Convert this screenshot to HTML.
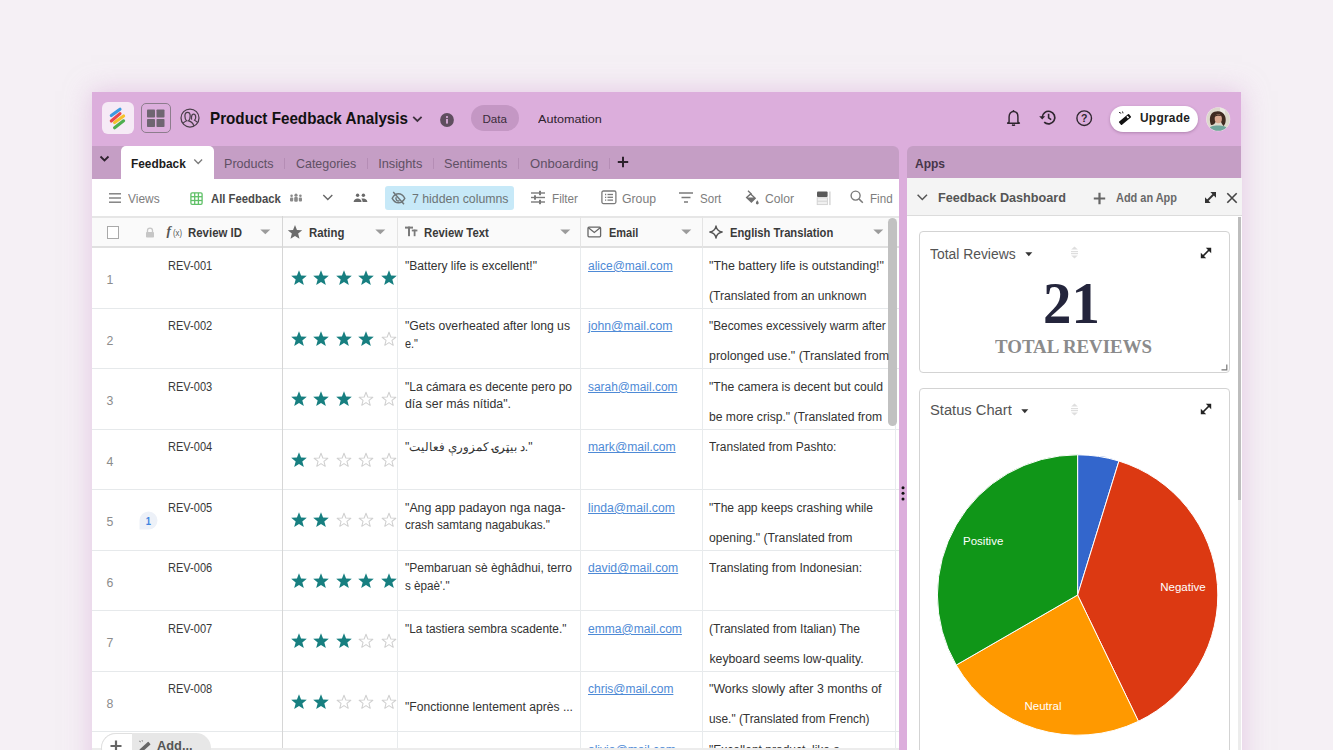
<!DOCTYPE html><html><head><meta charset="utf-8"><style>
html,body{margin:0;padding:0;}
body{width:1333px;height:750px;overflow:hidden;background:#f5f0f5;position:relative;font-family:"Liberation Sans",sans-serif;}
#win{position:absolute;left:92px;top:92px;width:1149px;height:700px;background:#dcaedc;box-shadow:0 0 24px 1px rgba(214,168,214,0.55);}
#root{position:absolute;left:0;top:0;width:1333px;height:750px;overflow:hidden;}
</style></head><body><div id="win"></div><div id="root">
<div style="position:absolute;left:102px;top:102px;width:32px;height:32px;background:#f6eaf6;border-radius:6px;"></div>
<svg style="position:absolute;left:102px;top:102px;overflow:visible;" width="32" height="32" viewBox="0 0 32 32"><g stroke-linecap="round" stroke-width="3.1"><line x1="9.3" y1="13.6" x2="18" y2="7.2" stroke="#3d9ae0"/><line x1="9.3" y1="19" x2="18" y2="11.6" stroke="#e9484e"/><line x1="12.6" y1="20.6" x2="21.6" y2="14" stroke="#f5c22c"/><line x1="12.6" y1="25.8" x2="21.6" y2="18.8" stroke="#4fae4f"/></g></svg>
<div style="position:absolute;left:141px;top:103px;width:27.5px;height:27.5px;border:1.4px solid #8d7d8d;border-radius:5px;"></div>
<svg style="position:absolute;left:141px;top:103px;overflow:visible;" width="30" height="30" viewBox="0 0 30 30"><g fill="#6f6571"><rect x="6" y="6.5" width="8" height="8" rx="0.8"/><rect x="15.5" y="6.5" width="8" height="8" rx="0.8"/><rect x="6" y="16" width="8" height="8" rx="0.8"/><rect x="15.5" y="16" width="8" height="8" rx="0.8"/></g></svg>
<svg style="position:absolute;left:178px;top:106px;overflow:visible;" width="24" height="24" viewBox="0 0 24 24"><g fill="none" stroke="#4b3f4b" stroke-width="1.25"><circle cx="12" cy="12" r="9"/><path d="M5 17.2 C6.3 15.9 7.7 15.2 8.6 14.8 C7.4 13.7 6.9 11.9 6.9 10 C6.9 7.6 8 6.3 9.6 6.3 C11.2 6.3 12.2 7.6 12.2 10 C12.2 11.9 11.8 13.7 10.6 14.8 C12.6 15.4 15 16.4 15.8 19.8"/><path d="M13.7 13.6 C13.4 12.8 13.4 11.9 13.5 11 C13.7 9.2 14.5 8.2 15.6 8.2 C16.8 8.2 17.7 9.4 17.7 11.2 C17.7 12.5 17.3 13.4 16.6 14.2 C17.6 14.7 18.4 15.3 19 16"/></g></svg>
<svg style="position:absolute;left:412px;top:115px;overflow:visible;" width="11" height="8" viewBox="0 0 11 8"><polyline points="1.2,1.8 5.4,6 9.6,1.8" fill="none" stroke="#3e313e" stroke-width="1.8"/></svg>
<svg style="position:absolute;left:440px;top:113px;overflow:visible;" width="14" height="14" viewBox="0 0 14 14"><circle cx="7" cy="7" r="6.9" fill="#5f4e5f"/><rect x="6.1" y="6" width="1.8" height="4.6" fill="#dcaedc"/><circle cx="7" cy="4.1" r="1.05" fill="#dcaedc"/></svg>
<div style="position:absolute;left:471px;top:105.3px;width:48px;height:26px;background:#c497c4;border-radius:13px;"></div>
<svg style="position:absolute;left:1005px;top:108px;overflow:visible;" width="17" height="20" viewBox="0 0 17 20"><g transform="translate(8.5 10) scale(0.9 0.92) translate(-8.5 -10)"><path d="M3.6 14.3 L3.6 8.8 C3.6 5.4 5.6 3 8.5 3 C11.4 3 13.4 5.4 13.4 8.8 L13.4 14.3 L15 15.6 L2 15.6 Z" fill="none" stroke="#2f262f" stroke-width="1.6" stroke-linejoin="round"/><path d="M7 17.2 Q8.5 18.8 10 17.2" stroke="#2f262f" stroke-width="1.6" fill="none"/><circle cx="8.5" cy="2.4" r="1" fill="#2f262f"/></g></svg>
<svg style="position:absolute;left:1038px;top:109px;overflow:visible;" width="20" height="17" viewBox="0 0 20 17"><path d="M4.2 8.5 A6.3 6.3 0 1 1 6.2 13.2" fill="none" stroke="#2f262f" stroke-width="1.7"/><path d="M1.2 7.2 L4.2 10.6 L7.2 7.2 Z" fill="#2f262f"/><path d="M10.6 4.8 L10.6 8.8 L13.2 10.6" fill="none" stroke="#2f262f" stroke-width="1.6"/></svg>
<svg style="position:absolute;left:1076px;top:110px;overflow:visible;" width="17" height="17" viewBox="0 0 17 17"><circle cx="8.2" cy="8.2" r="7.3" fill="none" stroke="#2f262f" stroke-width="1.4"/><text x="8.2" y="12.1" text-anchor="middle" font-family="Liberation Sans" font-weight="700" font-size="10.5" fill="#2f262f">?</text></svg>
<div style="position:absolute;left:1110.4px;top:105.5px;width:88px;height:26.3px;background:#fff;border-radius:13.5px;box-shadow:0 1px 3px rgba(90,50,90,0.35);"></div>
<svg style="position:absolute;left:1117px;top:111px;overflow:visible;" width="16" height="16" viewBox="0 0 16 16"><g transform="rotate(-40 8 8.5)"><rect x="1.5" y="6.3" width="13" height="4.4" rx="0.8" fill="#111"/><rect x="10.8" y="7.3" width="1.6" height="2.4" fill="#fff"/></g><g stroke="#111" stroke-width="0.9"><line x1="2" y1="1.3" x2="4.2" y2="2.3"/><line x1="5.5" y1="0.5" x2="6" y2="2.3"/></g></svg>
<svg style="position:absolute;left:1206px;top:107px;overflow:visible;" width="25" height="25" viewBox="0 0 25 25"><defs><clipPath id="av"><circle cx="12.2" cy="12.2" r="11.6"/></clipPath></defs><circle cx="12.2" cy="12.2" r="12" fill="#f2e6f0"/><g clip-path="url(#av)"><rect x="0" y="0" width="25" height="25" fill="#ddd8cc"/><rect x="14" y="0" width="5" height="12" fill="#ece9e2"/><path d="M1 26 C2 20 6 18.5 12 18.5 C18 18.5 22 20 24 26 Z" fill="#6fa59b"/><path d="M5 18 C3 13 3.5 6.5 8.5 4.8 C12.5 3.4 17.5 4.5 19 9 C20.5 13 19.5 17.5 17.5 19 C16 17 15.5 16 15 15 L9.5 15 C9 16.5 8 18 5 18 Z" fill="#3f2a20"/><ellipse cx="12.3" cy="11.8" rx="3.6" ry="4.5" fill="#d9a991"/><path d="M8.3 10 C8.8 7 13.5 6.3 16.3 9.5 C14.5 8.4 10.5 8.4 8.3 10 Z" fill="#3f2a20"/></g></svg>
<div style="position:absolute;left:92px;top:146px;width:807.3px;height:33px;background:#c59ec5;border-top-right-radius:6px;"></div>
<svg style="position:absolute;left:99px;top:154px;overflow:visible;" width="12" height="10" viewBox="0 0 12 10"><polyline points="1.5,2.5 5.5,6.5 9.5,2.5" fill="none" stroke="#2e222e" stroke-width="1.8"/></svg>
<div style="position:absolute;left:120.5px;top:146px;width:93px;height:33px;background:#fff;border-top-left-radius:5px;border-top-right-radius:5px;"></div>
<svg style="position:absolute;left:193px;top:157px;overflow:visible;" width="11" height="9" viewBox="0 0 11 9"><polyline points="1.3,2.5 5.2,6.5 9.1,2.5" fill="none" stroke="#7a7a7a" stroke-width="1.3"/></svg>
<div style="position:absolute;left:284.3px;top:157.6px;width:1px;height:11px;background:#b58db5;"></div>
<div style="position:absolute;left:366.5px;top:157.6px;width:1px;height:11px;background:#b58db5;"></div>
<div style="position:absolute;left:432.5px;top:157.6px;width:1px;height:11px;background:#b58db5;"></div>
<div style="position:absolute;left:518.3px;top:157.6px;width:1px;height:11px;background:#b58db5;"></div>
<div style="position:absolute;left:609.0px;top:157.6px;width:1px;height:11px;background:#b58db5;"></div>
<svg style="position:absolute;left:616px;top:155px;overflow:visible;" width="14" height="14" viewBox="0 0 14 14"><path d="M7 1.8 V12.2 M1.8 7 H12.2" stroke="#2c222c" stroke-width="2"/></svg>
<div style="position:absolute;left:92px;top:179px;width:807.3px;height:37px;background:#fff;"></div>
<svg style="position:absolute;left:108px;top:192px;overflow:visible;" width="14" height="12" viewBox="0 0 14 12"><g stroke="#7b7b7b" stroke-width="1.4"><line x1="1" y1="1.8" x2="13" y2="1.8"/><line x1="1" y1="6" x2="13" y2="6"/><line x1="1" y1="10.2" x2="13" y2="10.2"/></g></svg>
<svg style="position:absolute;left:190px;top:191.5px;overflow:visible;" width="13" height="13" viewBox="0 0 13 13"><g fill="none" stroke="#5fc067" stroke-width="1.3"><rect x="0.9" y="0.9" width="11.2" height="11.4" rx="1.2"/><line x1="4.7" y1="1" x2="4.7" y2="12.2"/><line x1="8.4" y1="1" x2="8.4" y2="12.2"/><line x1="1" y1="4.7" x2="12" y2="4.7"/><line x1="1" y1="8.5" x2="12" y2="8.5"/></g></svg>
<svg style="position:absolute;left:289px;top:192px;overflow:visible;" width="14" height="11" viewBox="0 0 14 11"><g fill="#8a8a8a"><circle cx="7" cy="3.2" r="1.6"/><rect x="5.2" y="5" width="3.6" height="4.8" rx="1"/><circle cx="2.6" cy="3.8" r="1.3"/><rect x="1" y="5.4" width="3.2" height="4.2" rx="1"/><circle cx="11.4" cy="3.8" r="1.3"/><rect x="9.8" y="5.4" width="3.2" height="4.2" rx="1"/></g></svg>
<svg style="position:absolute;left:322px;top:193px;overflow:visible;" width="12" height="9" viewBox="0 0 12 9"><polyline points="1.3,2 5.8,6.5 10.3,2" fill="none" stroke="#666" stroke-width="1.4"/></svg>
<svg style="position:absolute;left:353px;top:192px;overflow:visible;" width="15" height="11" viewBox="0 0 15 11"><g fill="#6a6a6a"><circle cx="4.6" cy="3.2" r="1.7"/><path d="M0.6 10 C0.8 7.6 2.4 6.4 4.6 6.4 C6.8 6.4 8.4 7.6 8.6 10 Z"/><circle cx="10.4" cy="3.2" r="1.7"/><path d="M8.2 6.8 C8.8 6.5 9.6 6.4 10.4 6.4 C12.6 6.4 14.2 7.6 14.4 10 H9.6 C9.5 8.6 9 7.5 8.2 6.8 Z"/></g></svg>
<div style="position:absolute;left:385px;top:186px;width:129px;height:23.5px;background:#c7e9f8;border-radius:3px;"></div>
<svg style="position:absolute;left:390.5px;top:191px;overflow:visible;" width="15" height="14" viewBox="0 0 15 14"><g fill="none" stroke="#6d7578" stroke-width="1.4"><path d="M1.2 7.3 C3 4 5.2 2.8 7.5 2.8 C9.8 2.8 12 4 13.8 7.3 C12 10.6 9.8 11.8 7.5 11.8 C5.2 11.8 3 10.6 1.2 7.3 Z"/><path d="M5.3 6.2 A2.4 2.4 0 0 0 8.6 9.5"/><line x1="2.2" y1="1" x2="13" y2="13.2"/></g></svg>
<svg style="position:absolute;left:530px;top:190px;overflow:visible;" width="16" height="15" viewBox="0 0 16 15"><g stroke="#7a7a7a" stroke-width="1.4"><line x1="1" y1="3" x2="15" y2="3"/><line x1="1" y1="7.5" x2="15" y2="7.5"/><line x1="1" y1="12" x2="15" y2="12"/></g><g fill="#7a7a7a"><rect x="9" y="0.8" width="2" height="4.4"/><rect x="4" y="5.3" width="2" height="4.4"/><rect x="9" y="9.8" width="2" height="4.4"/></g></svg>
<svg style="position:absolute;left:601px;top:190px;overflow:visible;" width="16" height="15" viewBox="0 0 16 15"><g fill="none" stroke="#7a7a7a" stroke-width="1.3"><rect x="0.9" y="1" width="14" height="12.6" rx="1.5"/></g><g stroke="#7a7a7a" stroke-width="1.3"><line x1="4" y1="4.5" x2="5.2" y2="4.5"/><line x1="6.5" y1="4.5" x2="12" y2="4.5"/><line x1="4" y1="7.3" x2="5.2" y2="7.3"/><line x1="6.5" y1="7.3" x2="12" y2="7.3"/><line x1="4" y1="10.1" x2="5.2" y2="10.1"/><line x1="6.5" y1="10.1" x2="12" y2="10.1"/></g></svg>
<svg style="position:absolute;left:678px;top:191px;overflow:visible;" width="16" height="13" viewBox="0 0 16 13"><g stroke="#7a7a7a" stroke-width="1.5"><line x1="1" y1="2" x2="15" y2="2"/><line x1="3.5" y1="6.5" x2="12.5" y2="6.5"/><line x1="6" y1="11" x2="10" y2="11"/></g></svg>
<svg style="position:absolute;left:744px;top:190px;overflow:visible;" width="16" height="15" viewBox="0 0 16 15"><g fill="#707070"><path d="M6.6 3 L12.2 8.2 L7.4 13 L1.6 7.6 Z M6.6 4.9 L3.6 7.6 L9.6 7.6 Z" fill-rule="evenodd"/><path d="M13.3 10.2 C14.1 11.4 14.7 12.2 14.7 13 C14.7 13.8 14.1 14.4 13.3 14.4 C12.5 14.4 11.9 13.8 11.9 13 C11.9 12.2 12.5 11.4 13.3 10.2 Z"/></g><line x1="4" y1="0.8" x2="7.6" y2="4.2" stroke="#707070" stroke-width="1.3"/></svg>
<svg style="position:absolute;left:816px;top:190.5px;overflow:visible;" width="16" height="15" viewBox="0 0 16 15"><rect x="1" y="0.5" width="10.6" height="5.6" rx="1" fill="#5a5a5a"/><rect x="1.2" y="6.8" width="10.2" height="6.8" fill="#f0f0f0" stroke="#d0d0d0" stroke-width="0.9"/><line x1="1.2" y1="10.2" x2="11.4" y2="10.2" stroke="#d0d0d0" stroke-width="0.9"/><rect x="13.2" y="0.5" width="1.4" height="13.6" fill="#d4d4d4"/></svg>
<svg style="position:absolute;left:850px;top:190px;overflow:visible;" width="14" height="14" viewBox="0 0 14 14"><circle cx="5.6" cy="5.6" r="4.5" fill="none" stroke="#7a7a7a" stroke-width="1.4"/><line x1="8.9" y1="8.9" x2="12.8" y2="12.8" stroke="#7a7a7a" stroke-width="1.5"/></svg>
<div style="position:absolute;left:92px;top:216px;width:807.3px;height:32px;background:#fafafa;"></div>
<div style="position:absolute;left:92px;top:215.6px;width:807.3px;height:2px;background:#e6e6e6;"></div>
<div style="position:absolute;left:92px;top:246.4px;width:807.3px;height:2px;background:#e0e0e0;"></div>
<div style="position:absolute;left:107px;top:226.3px;width:10.4px;height:10.4px;border:1.3px solid #a9a9a9;background:#fff;"></div>
<svg style="position:absolute;left:144.5px;top:226.5px;overflow:visible;" width="10" height="11" viewBox="0 0 10 11"><path d="M2.5 5 V3.6 A2.5 2.5 0 0 1 7.5 3.6 V5" fill="none" stroke="#c6c6c6" stroke-width="1.3"/><rect x="1" y="5" width="8" height="5.5" rx="0.8" fill="#c6c6c6"/></svg>
<svg style="position:absolute;left:259.8px;top:228.8px;overflow:visible;" width="11" height="6" viewBox="0 0 11 6"><path d="M0.3 0.4 H10.3 L5.3 5.3 Z" fill="#9b9b9b"/></svg>
<svg style="position:absolute;left:287px;top:224px;overflow:visible;" width="16" height="16" viewBox="0 0 16 16"><path d="M8.00,1.00 L9.94,5.93 L15.23,6.25 L11.14,9.62 L12.47,14.75 L8.00,11.90 L3.53,14.75 L4.86,9.62 L0.77,6.25 L6.06,5.93 Z" fill="#6b6b6b"/></svg>
<svg style="position:absolute;left:375px;top:228.8px;overflow:visible;" width="11" height="6" viewBox="0 0 11 6"><path d="M0.3 0.4 H10.3 L5.3 5.3 Z" fill="#9b9b9b"/></svg>
<div style="position:absolute;left:396.7px;top:216px;width:1px;height:32px;background:#e4e4e4;"></div>
<svg style="position:absolute;left:404px;top:225px;overflow:visible;" width="14" height="13" viewBox="0 0 14 13"><g fill="#7a7a7a"><rect x="1" y="1.6" width="8" height="2"/><rect x="4" y="1.6" width="2" height="9.6"/><rect x="7.8" y="4.6" width="5.6" height="1.8"/><rect x="9.7" y="4.6" width="1.8" height="6.6"/></g></svg>
<svg style="position:absolute;left:559.5px;top:228.8px;overflow:visible;" width="11" height="6" viewBox="0 0 11 6"><path d="M0.3 0.4 H10.3 L5.3 5.3 Z" fill="#9b9b9b"/></svg>
<div style="position:absolute;left:580px;top:216px;width:1px;height:32px;background:#e4e4e4;"></div>
<svg style="position:absolute;left:586.5px;top:225.5px;overflow:visible;" width="15" height="12" viewBox="0 0 15 12"><rect x="1" y="1.2" width="12.6" height="9.6" rx="1" fill="none" stroke="#666" stroke-width="1.3"/><polyline points="1.4,1.8 7.3,6.4 13.2,1.8" fill="none" stroke="#666" stroke-width="1.3"/></svg>
<svg style="position:absolute;left:680.5px;top:228.8px;overflow:visible;" width="11" height="6" viewBox="0 0 11 6"><path d="M0.3 0.4 H10.3 L5.3 5.3 Z" fill="#9b9b9b"/></svg>
<div style="position:absolute;left:702px;top:216px;width:1px;height:32px;background:#e4e4e4;"></div>
<svg style="position:absolute;left:709px;top:225px;overflow:visible;" width="14" height="14" viewBox="0 0 14 14"><path d="M7 0.8 C7.6 4.8 9.2 6.4 13.2 7 C9.2 7.6 7.6 9.2 7 13.2 C6.4 9.2 4.8 7.6 0.8 7 C4.8 6.4 6.4 4.8 7 0.8 Z" fill="none" stroke="#555" stroke-width="1.3" stroke-linejoin="round"/></svg>
<svg style="position:absolute;left:873px;top:228.8px;overflow:visible;" width="11" height="6" viewBox="0 0 11 6"><path d="M0.3 0.4 H10.3 L5.3 5.3 Z" fill="#9b9b9b"/></svg>
<div style="position:absolute;left:92px;top:248.3px;width:807.3px;height:500px;background:#fff;"></div>
<div style="position:absolute;left:92px;top:307.8px;width:807.3px;height:1px;background:#e6e9eb;"></div>
<svg style="position:absolute;left:289.5px;top:269.3px;overflow:visible;" width="18" height="18" viewBox="0 0 18 18"><path d="M9.00,1.20 L11.06,6.57 L16.80,6.87 L12.33,10.48 L13.82,16.03 L9.00,12.90 L4.18,16.03 L5.67,10.48 L1.20,6.87 L6.94,6.57 Z" fill="#177f80"/></svg>
<svg style="position:absolute;left:312.15px;top:269.3px;overflow:visible;" width="18" height="18" viewBox="0 0 18 18"><path d="M9.00,1.20 L11.06,6.57 L16.80,6.87 L12.33,10.48 L13.82,16.03 L9.00,12.90 L4.18,16.03 L5.67,10.48 L1.20,6.87 L6.94,6.57 Z" fill="#177f80"/></svg>
<svg style="position:absolute;left:334.8px;top:269.3px;overflow:visible;" width="18" height="18" viewBox="0 0 18 18"><path d="M9.00,1.20 L11.06,6.57 L16.80,6.87 L12.33,10.48 L13.82,16.03 L9.00,12.90 L4.18,16.03 L5.67,10.48 L1.20,6.87 L6.94,6.57 Z" fill="#177f80"/></svg>
<svg style="position:absolute;left:357.45px;top:269.3px;overflow:visible;" width="18" height="18" viewBox="0 0 18 18"><path d="M9.00,1.20 L11.06,6.57 L16.80,6.87 L12.33,10.48 L13.82,16.03 L9.00,12.90 L4.18,16.03 L5.67,10.48 L1.20,6.87 L6.94,6.57 Z" fill="#177f80"/></svg>
<svg style="position:absolute;left:380.1px;top:269.3px;overflow:visible;" width="18" height="18" viewBox="0 0 18 18"><path d="M9.00,1.20 L11.06,6.57 L16.80,6.87 L12.33,10.48 L13.82,16.03 L9.00,12.90 L4.18,16.03 L5.67,10.48 L1.20,6.87 L6.94,6.57 Z" fill="#177f80"/></svg>
<div style="position:absolute;left:92px;top:368.3px;width:807.3px;height:1px;background:#e6e9eb;"></div>
<svg style="position:absolute;left:289.5px;top:329.8px;overflow:visible;" width="18" height="18" viewBox="0 0 18 18"><path d="M9.00,1.20 L11.06,6.57 L16.80,6.87 L12.33,10.48 L13.82,16.03 L9.00,12.90 L4.18,16.03 L5.67,10.48 L1.20,6.87 L6.94,6.57 Z" fill="#177f80"/></svg>
<svg style="position:absolute;left:312.15px;top:329.8px;overflow:visible;" width="18" height="18" viewBox="0 0 18 18"><path d="M9.00,1.20 L11.06,6.57 L16.80,6.87 L12.33,10.48 L13.82,16.03 L9.00,12.90 L4.18,16.03 L5.67,10.48 L1.20,6.87 L6.94,6.57 Z" fill="#177f80"/></svg>
<svg style="position:absolute;left:334.8px;top:329.8px;overflow:visible;" width="18" height="18" viewBox="0 0 18 18"><path d="M9.00,1.20 L11.06,6.57 L16.80,6.87 L12.33,10.48 L13.82,16.03 L9.00,12.90 L4.18,16.03 L5.67,10.48 L1.20,6.87 L6.94,6.57 Z" fill="#177f80"/></svg>
<svg style="position:absolute;left:357.45px;top:329.8px;overflow:visible;" width="18" height="18" viewBox="0 0 18 18"><path d="M9.00,1.20 L11.06,6.57 L16.80,6.87 L12.33,10.48 L13.82,16.03 L9.00,12.90 L4.18,16.03 L5.67,10.48 L1.20,6.87 L6.94,6.57 Z" fill="#177f80"/></svg>
<svg style="position:absolute;left:380.1px;top:329.8px;overflow:visible;" width="18" height="18" viewBox="0 0 18 18"><path d="M9.00,2.30 L10.82,6.99 L15.85,7.28 L11.95,10.46 L13.23,15.32 L9.00,12.60 L4.77,15.32 L6.05,10.46 L2.15,7.28 L7.18,6.99 Z" fill="none" stroke="#d0d0d0" stroke-width="1.05" stroke-linejoin="round"/></svg>
<div style="position:absolute;left:92px;top:428.8px;width:807.3px;height:1px;background:#e6e9eb;"></div>
<svg style="position:absolute;left:289.5px;top:390.3px;overflow:visible;" width="18" height="18" viewBox="0 0 18 18"><path d="M9.00,1.20 L11.06,6.57 L16.80,6.87 L12.33,10.48 L13.82,16.03 L9.00,12.90 L4.18,16.03 L5.67,10.48 L1.20,6.87 L6.94,6.57 Z" fill="#177f80"/></svg>
<svg style="position:absolute;left:312.15px;top:390.3px;overflow:visible;" width="18" height="18" viewBox="0 0 18 18"><path d="M9.00,1.20 L11.06,6.57 L16.80,6.87 L12.33,10.48 L13.82,16.03 L9.00,12.90 L4.18,16.03 L5.67,10.48 L1.20,6.87 L6.94,6.57 Z" fill="#177f80"/></svg>
<svg style="position:absolute;left:334.8px;top:390.3px;overflow:visible;" width="18" height="18" viewBox="0 0 18 18"><path d="M9.00,1.20 L11.06,6.57 L16.80,6.87 L12.33,10.48 L13.82,16.03 L9.00,12.90 L4.18,16.03 L5.67,10.48 L1.20,6.87 L6.94,6.57 Z" fill="#177f80"/></svg>
<svg style="position:absolute;left:357.45px;top:390.3px;overflow:visible;" width="18" height="18" viewBox="0 0 18 18"><path d="M9.00,2.30 L10.82,6.99 L15.85,7.28 L11.95,10.46 L13.23,15.32 L9.00,12.60 L4.77,15.32 L6.05,10.46 L2.15,7.28 L7.18,6.99 Z" fill="none" stroke="#d0d0d0" stroke-width="1.05" stroke-linejoin="round"/></svg>
<svg style="position:absolute;left:380.1px;top:390.3px;overflow:visible;" width="18" height="18" viewBox="0 0 18 18"><path d="M9.00,2.30 L10.82,6.99 L15.85,7.28 L11.95,10.46 L13.23,15.32 L9.00,12.60 L4.77,15.32 L6.05,10.46 L2.15,7.28 L7.18,6.99 Z" fill="none" stroke="#d0d0d0" stroke-width="1.05" stroke-linejoin="round"/></svg>
<div style="position:absolute;left:92px;top:489.3px;width:807.3px;height:1px;background:#e6e9eb;"></div>
<svg style="position:absolute;left:289.5px;top:450.8px;overflow:visible;" width="18" height="18" viewBox="0 0 18 18"><path d="M9.00,1.20 L11.06,6.57 L16.80,6.87 L12.33,10.48 L13.82,16.03 L9.00,12.90 L4.18,16.03 L5.67,10.48 L1.20,6.87 L6.94,6.57 Z" fill="#177f80"/></svg>
<svg style="position:absolute;left:312.15px;top:450.8px;overflow:visible;" width="18" height="18" viewBox="0 0 18 18"><path d="M9.00,2.30 L10.82,6.99 L15.85,7.28 L11.95,10.46 L13.23,15.32 L9.00,12.60 L4.77,15.32 L6.05,10.46 L2.15,7.28 L7.18,6.99 Z" fill="none" stroke="#d0d0d0" stroke-width="1.05" stroke-linejoin="round"/></svg>
<svg style="position:absolute;left:334.8px;top:450.8px;overflow:visible;" width="18" height="18" viewBox="0 0 18 18"><path d="M9.00,2.30 L10.82,6.99 L15.85,7.28 L11.95,10.46 L13.23,15.32 L9.00,12.60 L4.77,15.32 L6.05,10.46 L2.15,7.28 L7.18,6.99 Z" fill="none" stroke="#d0d0d0" stroke-width="1.05" stroke-linejoin="round"/></svg>
<svg style="position:absolute;left:357.45px;top:450.8px;overflow:visible;" width="18" height="18" viewBox="0 0 18 18"><path d="M9.00,2.30 L10.82,6.99 L15.85,7.28 L11.95,10.46 L13.23,15.32 L9.00,12.60 L4.77,15.32 L6.05,10.46 L2.15,7.28 L7.18,6.99 Z" fill="none" stroke="#d0d0d0" stroke-width="1.05" stroke-linejoin="round"/></svg>
<svg style="position:absolute;left:380.1px;top:450.8px;overflow:visible;" width="18" height="18" viewBox="0 0 18 18"><path d="M9.00,2.30 L10.82,6.99 L15.85,7.28 L11.95,10.46 L13.23,15.32 L9.00,12.60 L4.77,15.32 L6.05,10.46 L2.15,7.28 L7.18,6.99 Z" fill="none" stroke="#d0d0d0" stroke-width="1.05" stroke-linejoin="round"/></svg>
<div style="position:absolute;left:92px;top:549.8px;width:807.3px;height:1px;background:#e6e9eb;"></div>
<svg style="position:absolute;left:289.5px;top:511.3px;overflow:visible;" width="18" height="18" viewBox="0 0 18 18"><path d="M9.00,1.20 L11.06,6.57 L16.80,6.87 L12.33,10.48 L13.82,16.03 L9.00,12.90 L4.18,16.03 L5.67,10.48 L1.20,6.87 L6.94,6.57 Z" fill="#177f80"/></svg>
<svg style="position:absolute;left:312.15px;top:511.3px;overflow:visible;" width="18" height="18" viewBox="0 0 18 18"><path d="M9.00,1.20 L11.06,6.57 L16.80,6.87 L12.33,10.48 L13.82,16.03 L9.00,12.90 L4.18,16.03 L5.67,10.48 L1.20,6.87 L6.94,6.57 Z" fill="#177f80"/></svg>
<svg style="position:absolute;left:334.8px;top:511.3px;overflow:visible;" width="18" height="18" viewBox="0 0 18 18"><path d="M9.00,2.30 L10.82,6.99 L15.85,7.28 L11.95,10.46 L13.23,15.32 L9.00,12.60 L4.77,15.32 L6.05,10.46 L2.15,7.28 L7.18,6.99 Z" fill="none" stroke="#d0d0d0" stroke-width="1.05" stroke-linejoin="round"/></svg>
<svg style="position:absolute;left:357.45px;top:511.3px;overflow:visible;" width="18" height="18" viewBox="0 0 18 18"><path d="M9.00,2.30 L10.82,6.99 L15.85,7.28 L11.95,10.46 L13.23,15.32 L9.00,12.60 L4.77,15.32 L6.05,10.46 L2.15,7.28 L7.18,6.99 Z" fill="none" stroke="#d0d0d0" stroke-width="1.05" stroke-linejoin="round"/></svg>
<svg style="position:absolute;left:380.1px;top:511.3px;overflow:visible;" width="18" height="18" viewBox="0 0 18 18"><path d="M9.00,2.30 L10.82,6.99 L15.85,7.28 L11.95,10.46 L13.23,15.32 L9.00,12.60 L4.77,15.32 L6.05,10.46 L2.15,7.28 L7.18,6.99 Z" fill="none" stroke="#d0d0d0" stroke-width="1.05" stroke-linejoin="round"/></svg>
<div style="position:absolute;left:92px;top:610.3px;width:807.3px;height:1px;background:#e6e9eb;"></div>
<svg style="position:absolute;left:289.5px;top:571.8px;overflow:visible;" width="18" height="18" viewBox="0 0 18 18"><path d="M9.00,1.20 L11.06,6.57 L16.80,6.87 L12.33,10.48 L13.82,16.03 L9.00,12.90 L4.18,16.03 L5.67,10.48 L1.20,6.87 L6.94,6.57 Z" fill="#177f80"/></svg>
<svg style="position:absolute;left:312.15px;top:571.8px;overflow:visible;" width="18" height="18" viewBox="0 0 18 18"><path d="M9.00,1.20 L11.06,6.57 L16.80,6.87 L12.33,10.48 L13.82,16.03 L9.00,12.90 L4.18,16.03 L5.67,10.48 L1.20,6.87 L6.94,6.57 Z" fill="#177f80"/></svg>
<svg style="position:absolute;left:334.8px;top:571.8px;overflow:visible;" width="18" height="18" viewBox="0 0 18 18"><path d="M9.00,1.20 L11.06,6.57 L16.80,6.87 L12.33,10.48 L13.82,16.03 L9.00,12.90 L4.18,16.03 L5.67,10.48 L1.20,6.87 L6.94,6.57 Z" fill="#177f80"/></svg>
<svg style="position:absolute;left:357.45px;top:571.8px;overflow:visible;" width="18" height="18" viewBox="0 0 18 18"><path d="M9.00,1.20 L11.06,6.57 L16.80,6.87 L12.33,10.48 L13.82,16.03 L9.00,12.90 L4.18,16.03 L5.67,10.48 L1.20,6.87 L6.94,6.57 Z" fill="#177f80"/></svg>
<svg style="position:absolute;left:380.1px;top:571.8px;overflow:visible;" width="18" height="18" viewBox="0 0 18 18"><path d="M9.00,1.20 L11.06,6.57 L16.80,6.87 L12.33,10.48 L13.82,16.03 L9.00,12.90 L4.18,16.03 L5.67,10.48 L1.20,6.87 L6.94,6.57 Z" fill="#177f80"/></svg>
<div style="position:absolute;left:92px;top:670.8px;width:807.3px;height:1px;background:#e6e9eb;"></div>
<svg style="position:absolute;left:289.5px;top:632.3px;overflow:visible;" width="18" height="18" viewBox="0 0 18 18"><path d="M9.00,1.20 L11.06,6.57 L16.80,6.87 L12.33,10.48 L13.82,16.03 L9.00,12.90 L4.18,16.03 L5.67,10.48 L1.20,6.87 L6.94,6.57 Z" fill="#177f80"/></svg>
<svg style="position:absolute;left:312.15px;top:632.3px;overflow:visible;" width="18" height="18" viewBox="0 0 18 18"><path d="M9.00,1.20 L11.06,6.57 L16.80,6.87 L12.33,10.48 L13.82,16.03 L9.00,12.90 L4.18,16.03 L5.67,10.48 L1.20,6.87 L6.94,6.57 Z" fill="#177f80"/></svg>
<svg style="position:absolute;left:334.8px;top:632.3px;overflow:visible;" width="18" height="18" viewBox="0 0 18 18"><path d="M9.00,1.20 L11.06,6.57 L16.80,6.87 L12.33,10.48 L13.82,16.03 L9.00,12.90 L4.18,16.03 L5.67,10.48 L1.20,6.87 L6.94,6.57 Z" fill="#177f80"/></svg>
<svg style="position:absolute;left:357.45px;top:632.3px;overflow:visible;" width="18" height="18" viewBox="0 0 18 18"><path d="M9.00,2.30 L10.82,6.99 L15.85,7.28 L11.95,10.46 L13.23,15.32 L9.00,12.60 L4.77,15.32 L6.05,10.46 L2.15,7.28 L7.18,6.99 Z" fill="none" stroke="#d0d0d0" stroke-width="1.05" stroke-linejoin="round"/></svg>
<svg style="position:absolute;left:380.1px;top:632.3px;overflow:visible;" width="18" height="18" viewBox="0 0 18 18"><path d="M9.00,2.30 L10.82,6.99 L15.85,7.28 L11.95,10.46 L13.23,15.32 L9.00,12.60 L4.77,15.32 L6.05,10.46 L2.15,7.28 L7.18,6.99 Z" fill="none" stroke="#d0d0d0" stroke-width="1.05" stroke-linejoin="round"/></svg>
<div style="position:absolute;left:92px;top:731.3px;width:807.3px;height:1px;background:#e6e9eb;"></div>
<svg style="position:absolute;left:289.5px;top:692.8px;overflow:visible;" width="18" height="18" viewBox="0 0 18 18"><path d="M9.00,1.20 L11.06,6.57 L16.80,6.87 L12.33,10.48 L13.82,16.03 L9.00,12.90 L4.18,16.03 L5.67,10.48 L1.20,6.87 L6.94,6.57 Z" fill="#177f80"/></svg>
<svg style="position:absolute;left:312.15px;top:692.8px;overflow:visible;" width="18" height="18" viewBox="0 0 18 18"><path d="M9.00,1.20 L11.06,6.57 L16.80,6.87 L12.33,10.48 L13.82,16.03 L9.00,12.90 L4.18,16.03 L5.67,10.48 L1.20,6.87 L6.94,6.57 Z" fill="#177f80"/></svg>
<svg style="position:absolute;left:334.8px;top:692.8px;overflow:visible;" width="18" height="18" viewBox="0 0 18 18"><path d="M9.00,2.30 L10.82,6.99 L15.85,7.28 L11.95,10.46 L13.23,15.32 L9.00,12.60 L4.77,15.32 L6.05,10.46 L2.15,7.28 L7.18,6.99 Z" fill="none" stroke="#d0d0d0" stroke-width="1.05" stroke-linejoin="round"/></svg>
<svg style="position:absolute;left:357.45px;top:692.8px;overflow:visible;" width="18" height="18" viewBox="0 0 18 18"><path d="M9.00,2.30 L10.82,6.99 L15.85,7.28 L11.95,10.46 L13.23,15.32 L9.00,12.60 L4.77,15.32 L6.05,10.46 L2.15,7.28 L7.18,6.99 Z" fill="none" stroke="#d0d0d0" stroke-width="1.05" stroke-linejoin="round"/></svg>
<svg style="position:absolute;left:380.1px;top:692.8px;overflow:visible;" width="18" height="18" viewBox="0 0 18 18"><path d="M9.00,2.30 L10.82,6.99 L15.85,7.28 L11.95,10.46 L13.23,15.32 L9.00,12.60 L4.77,15.32 L6.05,10.46 L2.15,7.28 L7.18,6.99 Z" fill="none" stroke="#d0d0d0" stroke-width="1.05" stroke-linejoin="round"/></svg>
<div style="position:absolute;left:281.5px;top:216px;width:1.6px;height:532px;background:#d6d6d6;"></div>
<div style="position:absolute;left:396.7px;top:248.3px;width:1px;height:500px;background:#e8ebed;"></div>
<div style="position:absolute;left:580px;top:248.3px;width:1px;height:500px;background:#e8ebed;"></div>
<div style="position:absolute;left:702px;top:248.3px;width:1px;height:500px;background:#e8ebed;"></div>
<div style="position:absolute;left:895px;top:248.3px;width:1px;height:500px;background:#e8ebed;"></div>
<svg style="position:absolute;left:139px;top:510.6px;overflow:visible;" width="19" height="19" viewBox="0 0 19 19"><path d="M0.5 18.5 V9.3 A9 9 0 1 1 9.5 18.5 Z" fill="#edf1f8"/><text x="9.4" y="13.6" text-anchor="middle" font-family="Liberation Sans" font-weight="700" font-size="11" fill="#4085e0" transform="translate(9.4 0) scale(0.85 1) translate(-9.4 0)">1</text></svg>
<div style="position:absolute;left:888.4px;top:217.5px;width:9px;height:208px;background:#c1c1c1;border-radius:4.5px;"></div>
<svg style="position:absolute;left:901px;top:486px;overflow:visible;" width="4" height="15" viewBox="0 0 4 15"><g fill="#111"><circle cx="2" cy="1.7" r="1.5"/><circle cx="2" cy="7.3" r="1.5"/><circle cx="2" cy="13" r="1.5"/></g></svg>
<div style="position:absolute;left:907px;top:146px;width:334.2px;height:33px;background:#c59ec5;border-top-left-radius:6px;"></div>
<div style="position:absolute;left:907px;top:178.4px;width:334.5px;height:37px;background:#f4f4f4;"></div>
<div style="position:absolute;left:907px;top:214.5px;width:334.5px;height:1.2px;background:#dcdcdc;"></div>
<svg style="position:absolute;left:915.8px;top:192.7px;overflow:visible;" width="13" height="9" viewBox="0 0 13 9"><polyline points="1.6,1.8 6.3,6.5 11,1.8" fill="none" stroke="#555" stroke-width="1.5"/></svg>
<svg style="position:absolute;left:1093px;top:191.5px;overflow:visible;" width="13" height="13" viewBox="0 0 13 13"><path d="M6.5 0.8 V12.2 M0.8 6.5 H12.2" stroke="#666" stroke-width="2.2"/></svg>
<svg style="position:absolute;left:1204px;top:191px;overflow:visible;" width="13" height="13" viewBox="0 0 13 13"><g stroke="#333" stroke-width="1.8" fill="#333"><line x1="3" y1="10" x2="10" y2="3"/></g><path d="M6.3 1 H12 V6.7 Z M1 6.3 V12 H6.7 Z" fill="#333"/></svg>
<svg style="position:absolute;left:1226px;top:191.5px;overflow:visible;" width="12" height="12" viewBox="0 0 12 12"><path d="M1.3 1.3 L10.7 10.7 M10.7 1.3 L1.3 10.7" stroke="#444" stroke-width="1.6"/></svg>
<div style="position:absolute;left:907px;top:215.7px;width:334.5px;height:540px;background:#fff;"></div>
<div style="position:absolute;left:1238.2px;top:216.5px;width:3px;height:284px;background:#bdbdbd;"></div>
<div style="position:absolute;left:1238.2px;top:500px;width:3px;height:250px;background:#ececec;"></div>
<div style="position:absolute;left:918.8px;top:231.3px;width:310.9px;height:141.5px;border:1.4px solid #d3d3d3;border-radius:4px;box-sizing:border-box;background:#fff;"></div>
<div style="position:absolute;left:918.8px;top:387.5px;width:310.9px;height:400px;border:1.4px solid #d3d3d3;border-radius:4px;box-sizing:border-box;background:#fff;"></div>
<svg style="position:absolute;left:1025px;top:252.39999999999998px;overflow:visible;" width="8" height="5" viewBox="0 0 8 5"><path d="M0.3 0.3 H7.3 L3.8 4.3 Z" fill="#333"/></svg>
<svg style="position:absolute;left:1069.5px;top:246.39999999999998px;overflow:visible;" width="9" height="13" viewBox="0 0 9 13"><g fill="#dedede"><path d="M4.5 0.5 L7.8 3.6 H1.2 Z"/><path d="M4.5 12.5 L7.8 9.4 H1.2 Z"/><rect x="1" y="5" width="7" height="1.2"/><rect x="1" y="7" width="7" height="1.2"/></g></svg>
<svg style="position:absolute;left:1200px;top:246.89999999999998px;overflow:visible;" width="12" height="12" viewBox="0 0 12 12"><line x1="2.5" y1="9.5" x2="9.5" y2="2.5" stroke="#222" stroke-width="1.7"/><path d="M5.8 0.8 H11.2 V6.2 Z M0.8 5.8 V11.2 H6.2 Z" fill="#222"/></svg>
<svg style="position:absolute;left:1020.5px;top:408.7px;overflow:visible;" width="8" height="5" viewBox="0 0 8 5"><path d="M0.3 0.3 H7.3 L3.8 4.3 Z" fill="#333"/></svg>
<svg style="position:absolute;left:1069.5px;top:402.7px;overflow:visible;" width="9" height="13" viewBox="0 0 9 13"><g fill="#dedede"><path d="M4.5 0.5 L7.8 3.6 H1.2 Z"/><path d="M4.5 12.5 L7.8 9.4 H1.2 Z"/><rect x="1" y="5" width="7" height="1.2"/><rect x="1" y="7" width="7" height="1.2"/></g></svg>
<svg style="position:absolute;left:1200px;top:403.2px;overflow:visible;" width="12" height="12" viewBox="0 0 12 12"><line x1="2.5" y1="9.5" x2="9.5" y2="2.5" stroke="#222" stroke-width="1.7"/><path d="M5.8 0.8 H11.2 V6.2 Z M0.8 5.8 V11.2 H6.2 Z" fill="#222"/></svg>
<svg style="position:absolute;left:1221px;top:364px;overflow:visible;" width="7" height="7" viewBox="0 0 7 7"><path d="M5.8 0.5 V5.8 H0.5" fill="none" stroke="#777" stroke-width="1.2"/></svg>
<svg style="position:absolute;left:0;top:0" width="1333" height="750"><path d="M1077.6 595.0 L1077.60 454.80 A140.2 140.2 0 0 1 1118.93 461.03 Z" fill="#3366cc" stroke="#fff" stroke-width="1"/><path d="M1077.6 595.0 L1118.93 461.03 A140.2 140.2 0 0 1 1138.43 721.32 Z" fill="#dc3912" stroke="#fff" stroke-width="1"/><path d="M1077.6 595.0 L1138.43 721.32 A140.2 140.2 0 0 1 956.18 665.10 Z" fill="#ff9900" stroke="#fff" stroke-width="1"/><path d="M1077.6 595.0 L956.18 665.10 A140.2 140.2 0 0 1 1077.60 454.80 Z" fill="#109618" stroke="#fff" stroke-width="1"/><g font-family="Liberation Sans" font-size="11.5" fill="#fff" text-anchor="middle"><text x="983.2" y="545">Positive</text><text x="1182.9" y="591">Negative</text><text x="1043" y="710.4">Neutral</text></g></svg>
<span style="position:absolute;left:210.4px;top:111.15px;font-family:'Liberation Sans', sans-serif;font-size:16.6px;font-weight:700;color:#111;line-height:1;white-space:pre;transform:scaleX(0.9162);transform-origin:0 0;">Product Feedback Analysis</span>
<span style="position:absolute;left:482.5px;top:113.48px;font-family:'Liberation Sans', sans-serif;font-size:11.6px;font-weight:400;color:#3a2c3a;line-height:1;white-space:pre;">Data</span>
<span style="position:absolute;left:537.8px;top:114.11px;font-family:'Liberation Sans', sans-serif;font-size:11.8px;font-weight:400;color:#2e222e;line-height:1;white-space:pre;transform:scaleX(1.0689);transform-origin:0 0;">Automation</span>
<span style="position:absolute;left:1139.8px;top:111.82px;font-family:'Liberation Sans', sans-serif;font-size:12.5px;font-weight:700;color:#222;line-height:1;white-space:pre;letter-spacing:0.3px;transform:scaleX(0.9505);transform-origin:0 0;">Upgrade</span>
<span style="position:absolute;left:131.25px;top:156.53px;font-family:'Liberation Sans', sans-serif;font-size:13.2px;font-weight:700;color:#1c1c1c;line-height:1;white-space:pre;transform:scaleX(0.9007);transform-origin:0 0;">Feedback</span>
<span style="position:absolute;left:224.2px;top:157.86px;font-family:'Liberation Sans', sans-serif;font-size:12.8px;font-weight:400;color:#5f5064;line-height:1;white-space:pre;transform:scaleX(0.9819);transform-origin:0 0;">Products</span>
<span style="position:absolute;left:295.8px;top:157.86px;font-family:'Liberation Sans', sans-serif;font-size:12.8px;font-weight:400;color:#5f5064;line-height:1;white-space:pre;transform:scaleX(0.9727);transform-origin:0 0;">Categories</span>
<span style="position:absolute;left:378.2px;top:157.86px;font-family:'Liberation Sans', sans-serif;font-size:12.8px;font-weight:400;color:#5f5064;line-height:1;white-space:pre;">Insights</span>
<span style="position:absolute;left:443.9px;top:157.86px;font-family:'Liberation Sans', sans-serif;font-size:12.8px;font-weight:400;color:#5f5064;line-height:1;white-space:pre;transform:scaleX(0.9886);transform-origin:0 0;">Sentiments</span>
<span style="position:absolute;left:529.5px;top:157.86px;font-family:'Liberation Sans', sans-serif;font-size:12.8px;font-weight:400;color:#5f5064;line-height:1;white-space:pre;transform:scaleX(1.0196);transform-origin:0 0;">Onboarding</span>
<span style="position:absolute;left:128.3px;top:193.36px;font-family:'Liberation Sans', sans-serif;font-size:12.8px;font-weight:400;color:#7d7d7d;line-height:1;white-space:pre;transform:scaleX(0.9320);transform-origin:0 0;">Views</span>
<span style="position:absolute;left:211px;top:192.30px;font-family:'Liberation Sans', sans-serif;font-size:13px;font-weight:700;color:#4a4a4a;line-height:1;white-space:pre;transform:scaleX(0.8703);transform-origin:0 0;">All Feedback</span>
<span style="position:absolute;left:411.5px;top:193.36px;font-family:'Liberation Sans', sans-serif;font-size:12.8px;font-weight:400;color:#6c7476;line-height:1;white-space:pre;transform:scaleX(0.9620);transform-origin:0 0;">7 hidden columns</span>
<span style="position:absolute;left:552.3px;top:193.36px;font-family:'Liberation Sans', sans-serif;font-size:12.8px;font-weight:400;color:#7d7d7d;line-height:1;white-space:pre;transform:scaleX(0.9143);transform-origin:0 0;">Filter</span>
<span style="position:absolute;left:622px;top:193.36px;font-family:'Liberation Sans', sans-serif;font-size:12.8px;font-weight:400;color:#7d7d7d;line-height:1;white-space:pre;transform:scaleX(0.9556);transform-origin:0 0;">Group</span>
<span style="position:absolute;left:699.8px;top:193.36px;font-family:'Liberation Sans', sans-serif;font-size:12.8px;font-weight:400;color:#7d7d7d;line-height:1;white-space:pre;transform:scaleX(0.9027);transform-origin:0 0;">Sort</span>
<span style="position:absolute;left:765px;top:193.36px;font-family:'Liberation Sans', sans-serif;font-size:12.8px;font-weight:400;color:#7d7d7d;line-height:1;white-space:pre;transform:scaleX(0.9479);transform-origin:0 0;">Color</span>
<span style="position:absolute;left:870px;top:193.36px;font-family:'Liberation Sans', sans-serif;font-size:12.8px;font-weight:400;color:#7d7d7d;line-height:1;white-space:pre;transform:scaleX(0.9074);transform-origin:0 0;">Find</span>
<span style="position:absolute;left:166.6px;top:224.29px;font-family:'Liberation Serif', serif;font-size:13.5px;font-weight:400;color:#555;line-height:1;white-space:pre;font-weight:700;"><i>f</i></span>
<span style="position:absolute;left:172.8px;top:228.98px;font-family:'Liberation Sans', sans-serif;font-size:9px;font-weight:400;color:#555;line-height:1;white-space:pre;transform:scaleX(0.8571);transform-origin:0 0;">(x)</span>
<span style="position:absolute;left:188px;top:225.75px;font-family:'Liberation Sans', sans-serif;font-size:13px;font-weight:700;color:#3a3a3a;line-height:1;white-space:pre;transform:scaleX(0.8792);transform-origin:0 0;">Review ID</span>
<span style="position:absolute;left:309px;top:225.75px;font-family:'Liberation Sans', sans-serif;font-size:13px;font-weight:700;color:#3a3a3a;line-height:1;white-space:pre;transform:scaleX(0.8751);transform-origin:0 0;">Rating</span>
<span style="position:absolute;left:424.2px;top:225.75px;font-family:'Liberation Sans', sans-serif;font-size:13px;font-weight:700;color:#3a3a3a;line-height:1;white-space:pre;transform:scaleX(0.8735);transform-origin:0 0;">Review Text</span>
<span style="position:absolute;left:608.7px;top:225.75px;font-family:'Liberation Sans', sans-serif;font-size:13px;font-weight:700;color:#3a3a3a;line-height:1;white-space:pre;transform:scaleX(0.8447);transform-origin:0 0;">Email</span>
<span style="position:absolute;left:729.7px;top:225.75px;font-family:'Liberation Sans', sans-serif;font-size:13px;font-weight:700;color:#3a3a3a;line-height:1;white-space:pre;transform:scaleX(0.8614);transform-origin:0 0;">English Translation</span>
<span style="position:absolute;left:106.5px;top:274.19px;font-family:'Liberation Sans', sans-serif;font-size:12.3px;font-weight:400;color:#8c8c8c;line-height:1;white-space:pre;">1</span>
<span style="position:absolute;left:167.7px;top:259.89px;font-family:'Liberation Sans', sans-serif;font-size:12.3px;font-weight:400;color:#383838;line-height:1;white-space:pre;transform:scaleX(0.8980);transform-origin:0 0;">REV-001</span>
<span style="position:absolute;left:404.5px;top:259.79px;font-family:'Liberation Sans', sans-serif;font-size:12.3px;font-weight:400;color:#333;line-height:1;white-space:pre;transform:scaleX(0.9814);transform-origin:0 0;">"Battery life is excellent!"</span>
<span style="position:absolute;left:587.5px;top:259.79px;font-family:'Liberation Sans', sans-serif;font-size:12.3px;font-weight:400;color:#4e8ad6;line-height:1;white-space:pre;text-decoration:underline;transform:scaleX(0.9739);transform-origin:0 0;">alice@mail.com</span>
<span style="position:absolute;left:709.4px;top:259.79px;font-family:'Liberation Sans', sans-serif;font-size:12.3px;font-weight:400;color:#333;line-height:1;white-space:pre;transform:scaleX(1.0128);transform-origin:0 0;">"The battery life is outstanding!"</span>
<span style="position:absolute;left:709.4px;top:289.79px;font-family:'Liberation Sans', sans-serif;font-size:12.3px;font-weight:400;color:#333;line-height:1;white-space:pre;transform:scaleX(0.9869);transform-origin:0 0;">(Translated from an unknown</span>
<span style="position:absolute;left:106.5px;top:334.69px;font-family:'Liberation Sans', sans-serif;font-size:12.3px;font-weight:400;color:#8c8c8c;line-height:1;white-space:pre;">2</span>
<span style="position:absolute;left:167.7px;top:320.39px;font-family:'Liberation Sans', sans-serif;font-size:12.3px;font-weight:400;color:#383838;line-height:1;white-space:pre;transform:scaleX(0.8980);transform-origin:0 0;">REV-002</span>
<span style="position:absolute;left:404.5px;top:320.29px;font-family:'Liberation Sans', sans-serif;font-size:12.3px;font-weight:400;color:#333;line-height:1;white-space:pre;transform:scaleX(0.9917);transform-origin:0 0;">"Gets overheated after long us</span>
<span style="position:absolute;left:404.5px;top:337.79px;font-family:'Liberation Sans', sans-serif;font-size:12.3px;font-weight:400;color:#333;line-height:1;white-space:pre;transform:scaleX(0.8889);transform-origin:0 0;">e."</span>
<span style="position:absolute;left:587.5px;top:320.29px;font-family:'Liberation Sans', sans-serif;font-size:12.3px;font-weight:400;color:#4e8ad6;line-height:1;white-space:pre;text-decoration:underline;transform:scaleX(0.9937);transform-origin:0 0;">john@mail.com</span>
<span style="position:absolute;left:709.4px;top:320.29px;font-family:'Liberation Sans', sans-serif;font-size:12.3px;font-weight:400;color:#333;line-height:1;white-space:pre;transform:scaleX(0.9634);transform-origin:0 0;">"Becomes excessively warm after</span>
<span style="position:absolute;left:709.4px;top:350.29px;font-family:'Liberation Sans', sans-serif;font-size:12.3px;font-weight:400;color:#333;line-height:1;white-space:pre;transform:scaleX(1.0062);transform-origin:0 0;">prolonged use." (Translated from</span>
<span style="position:absolute;left:106.5px;top:395.19px;font-family:'Liberation Sans', sans-serif;font-size:12.3px;font-weight:400;color:#8c8c8c;line-height:1;white-space:pre;">3</span>
<span style="position:absolute;left:167.7px;top:380.89px;font-family:'Liberation Sans', sans-serif;font-size:12.3px;font-weight:400;color:#383838;line-height:1;white-space:pre;transform:scaleX(0.8980);transform-origin:0 0;">REV-003</span>
<span style="position:absolute;left:404.5px;top:380.79px;font-family:'Liberation Sans', sans-serif;font-size:12.3px;font-weight:400;color:#333;line-height:1;white-space:pre;transform:scaleX(0.9756);transform-origin:0 0;">"La cámara es decente pero po</span>
<span style="position:absolute;left:404.5px;top:398.29px;font-family:'Liberation Sans', sans-serif;font-size:12.3px;font-weight:400;color:#333;line-height:1;white-space:pre;transform:scaleX(1.0044);transform-origin:0 0;">día ser más nítida".</span>
<span style="position:absolute;left:587.5px;top:380.79px;font-family:'Liberation Sans', sans-serif;font-size:12.3px;font-weight:400;color:#4e8ad6;line-height:1;white-space:pre;text-decoration:underline;transform:scaleX(0.9671);transform-origin:0 0;">sarah@mail.com</span>
<span style="position:absolute;left:709.4px;top:380.79px;font-family:'Liberation Sans', sans-serif;font-size:12.3px;font-weight:400;color:#333;line-height:1;white-space:pre;transform:scaleX(0.9890);transform-origin:0 0;">"The camera is decent but could</span>
<span style="position:absolute;left:709.4px;top:410.79px;font-family:'Liberation Sans', sans-serif;font-size:12.3px;font-weight:400;color:#333;line-height:1;white-space:pre;transform:scaleX(0.9861);transform-origin:0 0;">be more crisp." (Translated from</span>
<span style="position:absolute;left:106.5px;top:455.69px;font-family:'Liberation Sans', sans-serif;font-size:12.3px;font-weight:400;color:#8c8c8c;line-height:1;white-space:pre;">4</span>
<span style="position:absolute;left:167.7px;top:441.39px;font-family:'Liberation Sans', sans-serif;font-size:12.3px;font-weight:400;color:#383838;line-height:1;white-space:pre;transform:scaleX(0.8980);transform-origin:0 0;">REV-004</span>
<span style="position:absolute;left:404.5px;top:441.29px;font-family:'Liberation Sans', sans-serif;font-size:12.3px;font-weight:400;color:#333;line-height:1;white-space:pre;transform:scaleX(0.9852);transform-origin:0 0;">"د بیټرۍ کمزورې فعالیت."</span>
<span style="position:absolute;left:587.5px;top:441.29px;font-family:'Liberation Sans', sans-serif;font-size:12.3px;font-weight:400;color:#4e8ad6;line-height:1;white-space:pre;text-decoration:underline;transform:scaleX(0.9852);transform-origin:0 0;">mark@mail.com</span>
<span style="position:absolute;left:709.4px;top:441.29px;font-family:'Liberation Sans', sans-serif;font-size:12.3px;font-weight:400;color:#333;line-height:1;white-space:pre;transform:scaleX(0.9741);transform-origin:0 0;">Translated from Pashto:</span>
<span style="position:absolute;left:106.5px;top:516.19px;font-family:'Liberation Sans', sans-serif;font-size:12.3px;font-weight:400;color:#8c8c8c;line-height:1;white-space:pre;">5</span>
<span style="position:absolute;left:167.7px;top:501.89px;font-family:'Liberation Sans', sans-serif;font-size:12.3px;font-weight:400;color:#383838;line-height:1;white-space:pre;transform:scaleX(0.8980);transform-origin:0 0;">REV-005</span>
<span style="position:absolute;left:404.5px;top:501.79px;font-family:'Liberation Sans', sans-serif;font-size:12.3px;font-weight:400;color:#333;line-height:1;white-space:pre;transform:scaleX(1.0045);transform-origin:0 0;">"Ang app padayon nga naga-</span>
<span style="position:absolute;left:404.5px;top:519.29px;font-family:'Liberation Sans', sans-serif;font-size:12.3px;font-weight:400;color:#333;line-height:1;white-space:pre;transform:scaleX(0.9538);transform-origin:0 0;">crash samtang nagabukas."</span>
<span style="position:absolute;left:587.5px;top:501.79px;font-family:'Liberation Sans', sans-serif;font-size:12.3px;font-weight:400;color:#4e8ad6;line-height:1;white-space:pre;text-decoration:underline;transform:scaleX(0.9901);transform-origin:0 0;">linda@mail.com</span>
<span style="position:absolute;left:709.4px;top:501.79px;font-family:'Liberation Sans', sans-serif;font-size:12.3px;font-weight:400;color:#333;line-height:1;white-space:pre;transform:scaleX(0.9817);transform-origin:0 0;">"The app keeps crashing while</span>
<span style="position:absolute;left:709.4px;top:531.79px;font-family:'Liberation Sans', sans-serif;font-size:12.3px;font-weight:400;color:#333;line-height:1;white-space:pre;transform:scaleX(0.9916);transform-origin:0 0;">opening." (Translated from</span>
<span style="position:absolute;left:106.5px;top:576.69px;font-family:'Liberation Sans', sans-serif;font-size:12.3px;font-weight:400;color:#8c8c8c;line-height:1;white-space:pre;">6</span>
<span style="position:absolute;left:167.7px;top:562.39px;font-family:'Liberation Sans', sans-serif;font-size:12.3px;font-weight:400;color:#383838;line-height:1;white-space:pre;transform:scaleX(0.8980);transform-origin:0 0;">REV-006</span>
<span style="position:absolute;left:404.5px;top:562.29px;font-family:'Liberation Sans', sans-serif;font-size:12.3px;font-weight:400;color:#333;line-height:1;white-space:pre;transform:scaleX(0.9796);transform-origin:0 0;">"Pembaruan sè èghâdhui, terro</span>
<span style="position:absolute;left:404.5px;top:579.79px;font-family:'Liberation Sans', sans-serif;font-size:12.3px;font-weight:400;color:#333;line-height:1;white-space:pre;transform:scaleX(0.9498);transform-origin:0 0;">s èpaè'."</span>
<span style="position:absolute;left:587.5px;top:562.29px;font-family:'Liberation Sans', sans-serif;font-size:12.3px;font-weight:400;color:#4e8ad6;line-height:1;white-space:pre;text-decoration:underline;transform:scaleX(0.9904);transform-origin:0 0;">david@mail.com</span>
<span style="position:absolute;left:709.4px;top:562.29px;font-family:'Liberation Sans', sans-serif;font-size:12.3px;font-weight:400;color:#333;line-height:1;white-space:pre;transform:scaleX(0.9846);transform-origin:0 0;">Translating from Indonesian:</span>
<span style="position:absolute;left:106.5px;top:637.19px;font-family:'Liberation Sans', sans-serif;font-size:12.3px;font-weight:400;color:#8c8c8c;line-height:1;white-space:pre;">7</span>
<span style="position:absolute;left:167.7px;top:622.89px;font-family:'Liberation Sans', sans-serif;font-size:12.3px;font-weight:400;color:#383838;line-height:1;white-space:pre;transform:scaleX(0.8980);transform-origin:0 0;">REV-007</span>
<span style="position:absolute;left:404.5px;top:622.79px;font-family:'Liberation Sans', sans-serif;font-size:12.3px;font-weight:400;color:#333;line-height:1;white-space:pre;transform:scaleX(0.9647);transform-origin:0 0;">"La tastiera sembra scadente."</span>
<span style="position:absolute;left:587.5px;top:622.79px;font-family:'Liberation Sans', sans-serif;font-size:12.3px;font-weight:400;color:#4e8ad6;line-height:1;white-space:pre;text-decoration:underline;transform:scaleX(0.9797);transform-origin:0 0;">emma@mail.com</span>
<span style="position:absolute;left:709.4px;top:622.79px;font-family:'Liberation Sans', sans-serif;font-size:12.3px;font-weight:400;color:#333;line-height:1;white-space:pre;transform:scaleX(0.9775);transform-origin:0 0;">(Translated from Italian) The</span>
<span style="position:absolute;left:709.4px;top:652.79px;font-family:'Liberation Sans', sans-serif;font-size:12.3px;font-weight:400;color:#333;line-height:1;white-space:pre;">keyboard seems low-quality.</span>
<span style="position:absolute;left:106.5px;top:697.69px;font-family:'Liberation Sans', sans-serif;font-size:12.3px;font-weight:400;color:#8c8c8c;line-height:1;white-space:pre;">8</span>
<span style="position:absolute;left:167.7px;top:683.39px;font-family:'Liberation Sans', sans-serif;font-size:12.3px;font-weight:400;color:#383838;line-height:1;white-space:pre;transform:scaleX(0.8980);transform-origin:0 0;">REV-008</span>
<span style="position:absolute;left:404.5px;top:700.79px;font-family:'Liberation Sans', sans-serif;font-size:12.3px;font-weight:400;color:#333;line-height:1;white-space:pre;transform:scaleX(0.9854);transform-origin:0 0;">"Fonctionne lentement après ...</span>
<span style="position:absolute;left:587.5px;top:683.29px;font-family:'Liberation Sans', sans-serif;font-size:12.3px;font-weight:400;color:#4e8ad6;line-height:1;white-space:pre;text-decoration:underline;transform:scaleX(0.9744);transform-origin:0 0;">chris@mail.com</span>
<span style="position:absolute;left:709.4px;top:683.29px;font-family:'Liberation Sans', sans-serif;font-size:12.3px;font-weight:400;color:#333;line-height:1;white-space:pre;transform:scaleX(1.0054);transform-origin:0 0;">"Works slowly after 3 months of</span>
<span style="position:absolute;left:709.4px;top:713.29px;font-family:'Liberation Sans', sans-serif;font-size:12.3px;font-weight:400;color:#333;line-height:1;white-space:pre;transform:scaleX(0.9636);transform-origin:0 0;">use." (Translated from French)</span>
<span style="position:absolute;left:587.5px;top:743.79px;font-family:'Liberation Sans', sans-serif;font-size:12.3px;font-weight:400;color:#4e8ad6;line-height:1;white-space:pre;text-decoration:underline;transform:scaleX(0.9788);transform-origin:0 0;">olivia@mail.com</span>
<span style="position:absolute;left:709.4px;top:743.79px;font-family:'Liberation Sans', sans-serif;font-size:12.3px;font-weight:400;color:#333;line-height:1;white-space:pre;transform:scaleX(0.9759);transform-origin:0 0;">"Excellent product, like a</span>
<span style="position:absolute;left:914.8px;top:158.02px;font-family:'Liberation Sans', sans-serif;font-size:12.5px;font-weight:700;color:#46364a;line-height:1;white-space:pre;transform:scaleX(0.9600);transform-origin:0 0;">Apps</span>
<span style="position:absolute;left:938.3px;top:191.24px;font-family:'Liberation Sans', sans-serif;font-size:13.3px;font-weight:700;color:#555;line-height:1;white-space:pre;transform:scaleX(0.9517);transform-origin:0 0;">Feedback Dashboard</span>
<span style="position:absolute;left:1115.6px;top:191.92px;font-family:'Liberation Sans', sans-serif;font-size:12.5px;font-weight:700;color:#686868;line-height:1;white-space:pre;transform:scaleX(0.8755);transform-origin:0 0;">Add an App</span>
<span style="position:absolute;left:930px;top:247.05px;font-family:'Liberation Sans', sans-serif;font-size:14px;font-weight:400;color:#545454;line-height:1;white-space:pre;transform:scaleX(0.9910);transform-origin:0 0;">Total Reviews</span>
<span style="position:absolute;left:930px;top:403.35px;font-family:'Liberation Sans', sans-serif;font-size:14px;font-weight:400;color:#545454;line-height:1;white-space:pre;transform:scaleX(1.0510);transform-origin:0 0;">Status Chart</span>
<span style="position:absolute;left:1043.4px;top:274.51px;font-family:'Liberation Serif', serif;font-size:58.5px;font-weight:700;color:#24253c;line-height:1;white-space:pre;transform:scaleX(0.9709);transform-origin:0 0;">21</span>
<span style="position:absolute;left:995.4px;top:337.37px;font-family:'Liberation Serif', serif;font-size:19.5px;font-weight:700;color:#8b8b8b;line-height:1;white-space:pre;transform:scaleX(0.9668);transform-origin:0 0;">TOTAL REVIEWS</span>
<div style="position:absolute;left:92px;top:747.5px;width:807.3px;height:3px;background:#ececec;"></div>
<div style="position:absolute;left:100.5px;top:732.5px;width:110px;height:30px;background:#e7e7e7;border-radius:15px;"></div>
<div style="position:absolute;left:100.5px;top:732.5px;width:31px;height:30px;background:#fff;border:1px solid #e0e0e0;border-right:none;border-radius:15px 0 0 15px;box-sizing:border-box;"></div>
<svg style="position:absolute;left:109px;top:739px;overflow:visible;" width="14" height="14" viewBox="0 0 14 14"><path d="M7 1.5 V12.5 M1.5 7 H12.5" stroke="#666" stroke-width="2.2"/></svg>
<svg style="position:absolute;left:137px;top:739px;overflow:visible;" width="15" height="14" viewBox="0 0 15 14"><g transform="rotate(-42 8 8)"><rect x="2" y="6.2" width="12" height="3.6" rx="0.6" fill="#666"/></g><g stroke="#777" stroke-width="0.8"><line x1="2" y1="2" x2="4" y2="3"/><line x1="5" y1="1" x2="5.5" y2="2.6"/></g></svg>
<span style="position:absolute;left:157px;top:739.5px;font-family:'Liberation Sans';font-weight:700;font-size:12.8px;line-height:1;color:#555;">Add...</span>
</div></body></html>
